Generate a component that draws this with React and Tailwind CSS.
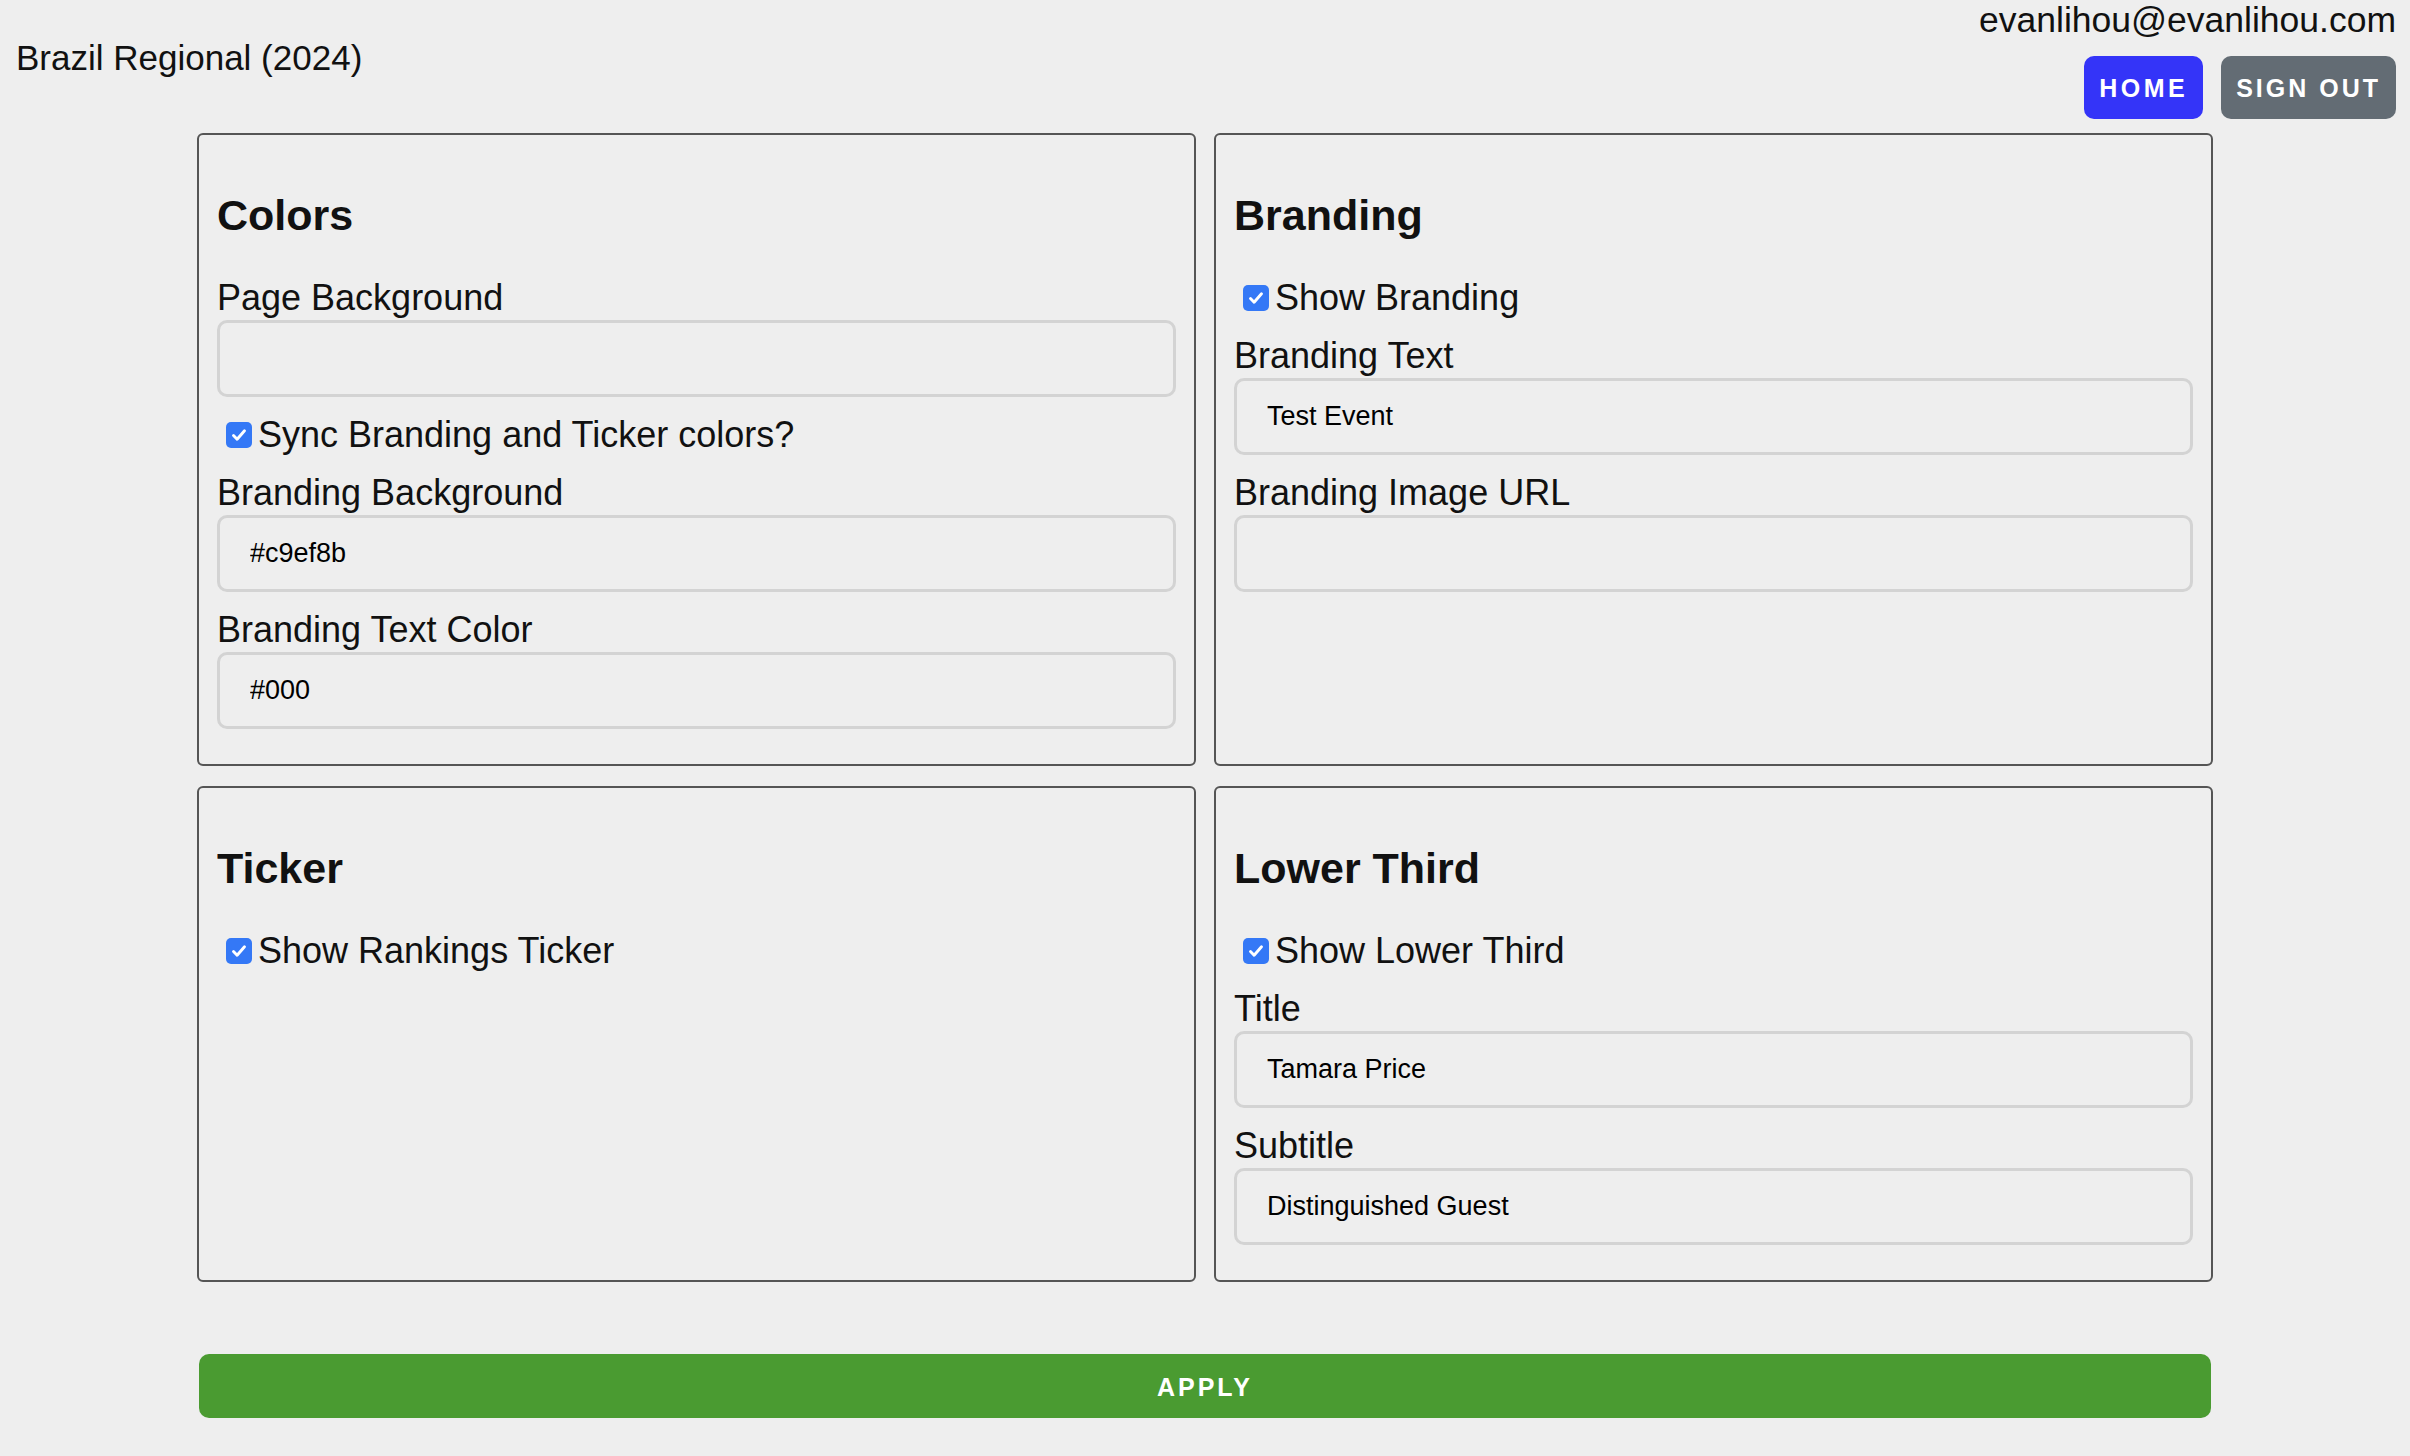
import { useState } from "react";

const Check = ({ label, checked, onChange }) => (
  <label className="flex items-center h-[41px] cursor-pointer">
    <span
      onClick={onChange}
      className={`ml-[9px] mr-[6px] w-[26px] h-[26px] rounded-[5px] flex items-center justify-center ${
        checked ? "bg-[#3478f6]" : "border-2 border-[#8a8a8a] bg-white"
      }`}
    >
      {checked && (
        <svg viewBox="0 0 16 16" className="w-[20px] h-[20px]">
          <path d="M3.6 8.4l2.9 3L12.4 4.6" fill="none" stroke="white" strokeWidth="2.3" strokeLinecap="round" strokeLinejoin="round" />
        </svg>
      )}
    </span>
    <span className="text-[36px] leading-[41px]">{label}</span>
  </label>
);

const Field = ({ label, value, onChange }) => (
  <div className="mt-[17px] first:mt-0">
    <div className="text-[36px] leading-[41px]">{label}</div>
    <input
      type="text"
      value={value}
      onChange={(e) => onChange(e.target.value)}
      className="mt-[2px] block w-full h-[77px] border-[3px] border-[#d3d3d3] rounded-[10px] bg-transparent pl-[30px] text-[27px] text-black outline-none"
    />
  </div>
);

const Panel = ({ title, children }) => (
  <div className="border-2 border-[#555555] rounded-[6px] px-[18px] pt-[18px] pb-[35px]">
    <h3 className="mt-[38px] mb-[38px] text-[43px] leading-[48px] font-bold">{title}</h3>
    <div className="flex flex-col">{children}</div>
  </div>
);

export default function App() {
  const [pageBg, setPageBg] = useState("");
  const [sync, setSync] = useState(true);
  const [brandBg, setBrandBg] = useState("#c9ef8b");
  const [brandColor, setBrandColor] = useState("#000");
  const [showBranding, setShowBranding] = useState(true);
  const [brandText, setBrandText] = useState("Test Event");
  const [brandImage, setBrandImage] = useState("");
  const [showTicker, setShowTicker] = useState(true);
  const [showLowerThird, setShowLowerThird] = useState(true);
  const [title, setTitle] = useState("Tamara Price");
  const [subtitle, setSubtitle] = useState("Distinguished Guest");

  return (
    <div className="min-h-screen bg-[#eeeeee] text-[#111111] font-['Liberation_Sans',Arial,sans-serif]">
      {/* header */}
      <div className="flex justify-between items-start pl-[16px] pr-[14px]">
        <div className="pt-[37px] text-[35px] leading-[41px]">Brazil Regional (2024)</div>
        <div className="flex flex-col items-end">
          <div className="text-[35.5px] leading-[41px]">evanlihou@evanlihou.com</div>
          <div className="mt-[15px] flex gap-[18px]">
            <button className="h-[63px] px-[15px] pt-[3px] rounded-[10px] bg-[#3434f8] text-white text-[25px] font-bold tracking-[3.5px]">
              HOME
            </button>
            <button className="h-[63px] px-[15px] pt-[3px] rounded-[10px] bg-[#636c74] text-white text-[25px] font-bold tracking-[3px]">
              SIGN OUT
            </button>
          </div>
        </div>
      </div>

      <div className="mt-[14px] w-[2016px] mx-auto grid grid-cols-2 gap-x-[18px] gap-y-[20px]">
        <Panel title="Colors">
          <Field label="Page Background" value={pageBg} onChange={setPageBg} />
          <div className="mt-[17px]">
            <Check label="Sync Branding and Ticker colors?" checked={sync} onChange={() => setSync(!sync)} />
          </div>
          <Field label="Branding Background" value={brandBg} onChange={setBrandBg} />
          <Field label="Branding Text Color" value={brandColor} onChange={setBrandColor} />
        </Panel>

        <Panel title="Branding">
          <Check label="Show Branding" checked={showBranding} onChange={() => setShowBranding(!showBranding)} />
          <Field label="Branding Text" value={brandText} onChange={setBrandText} />
          <Field label="Branding Image URL" value={brandImage} onChange={setBrandImage} />
        </Panel>

        <Panel title="Ticker">
          <Check label="Show Rankings Ticker" checked={showTicker} onChange={() => setShowTicker(!showTicker)} />
        </Panel>

        <Panel title="Lower Third">
          <Check label="Show Lower Third" checked={showLowerThird} onChange={() => setShowLowerThird(!showLowerThird)} />
          <Field label="Title" value={title} onChange={setTitle} />
          <Field label="Subtitle" value={subtitle} onChange={setSubtitle} />
        </Panel>
      </div>

      <button className="mt-[72px] block w-[2012px] mx-auto h-[64px] pt-[4px] rounded-[10px] bg-[#4a9b31] text-white text-[25px] font-bold tracking-[3px]">
        APPLY
      </button>
    </div>
  );
}
